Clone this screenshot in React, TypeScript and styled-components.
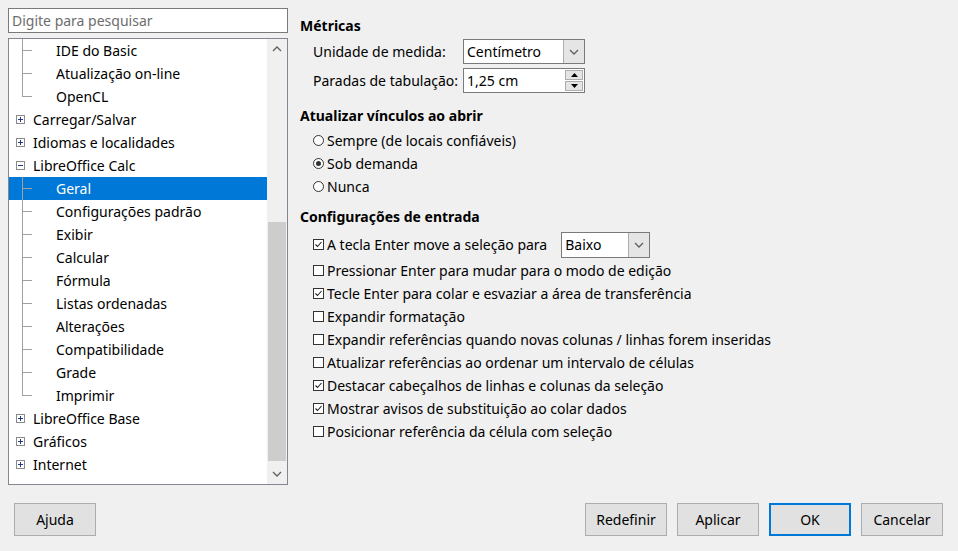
import React from "react";
import styled, { createGlobalStyle } from "styled-components";

const G = createGlobalStyle`
  html,body{margin:0;padding:0;background:#f0f0f0;}
  body{font-family:"Noto Sans","Open Sans",sans-serif;font-size:14px;color:#000;}
`;
const Page = styled.div`width:958px;height:551px;display:flex;flex-direction:column;box-sizing:border-box;padding:8px 8px 0 8px;`;
const Main = styled.div`display:flex;gap:12px;height:477px;`;
const Left = styled.div`width:280px;display:flex;flex-direction:column;gap:5px;`;
const Search = styled.div`height:25px;box-sizing:border-box;border:1px solid #7a7a7a;background:#fff;color:#6d6d6d;padding:1px 3px;line-height:21px;`;
const Tree = styled.div`flex:1;border:1px solid #828790;background:#fff;display:flex;overflow:hidden;`;
const Rows = styled.div`flex:1;padding-top:0px;`;
const Row = styled.div<{sel?:boolean}>`height:23px;display:flex;align-items:center;position:relative;background:${p=>p.sel?"#0078d7":"transparent"};color:${p=>p.sel?"#fff":"#000"};`;
const Child = styled.span`padding-left:47px;`;
const Top = styled.span`padding-left:8px;`;
const VLine = styled.span<{end?:boolean}>`position:absolute;left:13px;top:0;width:1px;height:${p=>p.end?"12px":"23px"};background:#a0a0a0;`;
const HLine = styled.span`position:absolute;left:13px;top:11px;width:10px;height:1px;background:#a0a0a0;`;
const Exp = styled.span`margin-left:7px;width:9px;height:9px;border:1px solid #8a8a8a;box-sizing:border-box;position:relative;flex:none;
 &::before{content:"";position:absolute;left:1px;right:1px;top:3px;height:1px;background:#1e3a8a;}
`;
const ExpPlus = styled(Exp)`&::after{content:"";position:absolute;top:1px;bottom:1px;left:3px;width:1px;background:#1e3a8a;}`;
const Scroll = styled.div`width:20px;background:#f0f0f0;display:flex;flex-direction:column;align-items:center;`;
const Arrow = styled.div`height:20px;display:flex;align-items:center;justify-content:center;color:#606060;`;
const Track = styled.div`flex:1;width:100%;display:flex;flex-direction:column;padding-top:163px;padding-bottom:3px;box-sizing:border-box;`;
const Thumb = styled.div`flex:1;background:#cdcdcd;margin:0 1px;`;
const Right = styled.div`flex:1;padding-top:7px;display:flex;flex-direction:column;`;
const H = styled.div`font-weight:bold;height:22px;line-height:22px;margin-bottom:2px;`;
const FormRow = styled.div`display:flex;align-items:center;height:25px;margin-bottom:4px;padding-left:13px;`;
const Label = styled.div`width:150px;`;
const Combo = styled.div<{w:number}>`width:${p=>p.w}px;height:25px;box-sizing:border-box;border:1px solid #7a7a7a;background:#fff;display:flex;`;
const ComboText = styled.div`flex:1;padding-left:3px;line-height:23px;`;
const ComboBtn = styled.div`width:20px;border-left:1px solid #adadad;background:#e5e5e5;display:flex;align-items:center;justify-content:center;`;
const Spin = styled.div`width:18px;display:flex;flex-direction:column;margin:1px;gap:1px;`;
const SpinB = styled.div`flex:1;border:1px solid #adadad;background:#e5e5e5;display:flex;align-items:center;justify-content:center;`;
const Opt = styled.div`display:flex;align-items:center;height:23px;padding-left:13px;gap:3px;`;
const Radio = styled.span<{on?:boolean}>`width:11px;height:11px;border-radius:50%;border:1px solid #333;background:#fff;box-sizing:border-box;display:flex;align-items:center;justify-content:center;
 &::after{content:"";width:5px;height:5px;border-radius:50%;background:${p=>p.on?"#333":"transparent"};}`;
const Box = styled.span`width:11px;height:11px;border:1px solid #333;background:#fff;box-sizing:border-box;display:flex;align-items:center;justify-content:center;flex:none;`;
const Gap = styled.div<{h:number}>`height:${p=>p.h}px;`;
const Foot = styled.div`display:flex;align-items:center;padding:18px 7px 0 6px;gap:10px;`;
const Btn = styled.div<{def?:boolean}>`width:82px;height:33px;box-sizing:border-box;border:${p=>p.def?"2px solid #0078d7":"1px solid #adadad"};background:#e1e1e1;display:flex;align-items:center;justify-content:center;`;
const Spacer = styled.div`flex:1;`;

const Chev = ({up}:{up?:boolean}) => <svg width="10" height="6" viewBox="0 0 10 6"><path d={up?"M1 5L5 1L9 5":"M1 1L5 5L9 1"} fill="none" stroke="#606060" strokeWidth="1.3"/></svg>;
const Tri = ({up}:{up?:boolean}) => <svg width="7" height="4" viewBox="0 0 7 4"><path d={up?"M0 4L3.5 0L7 4Z":"M0 0L3.5 4L7 0Z"} fill="#000"/></svg>;
const Check = () => <svg width="9" height="9" viewBox="0 0 9 9"><path d="M1.5 4.5L3.5 6.5L7.5 2" fill="none" stroke="#222" strokeWidth="1.1"/></svg>;

type T = {t:string; k:"c"|"p"|"m"; sel?:boolean; end?:boolean};
const tree:T[] = [
 {t:"IDE do Basic",k:"c"},{t:"Atualização on-line",k:"c"},{t:"OpenCL",k:"c",end:true},
 {t:"Carregar/Salvar",k:"p"},{t:"Idiomas e localidades",k:"p"},{t:"LibreOffice Calc",k:"m"},
 {t:"Geral",k:"c",sel:true},{t:"Configurações padrão",k:"c"},{t:"Exibir",k:"c"},{t:"Calcular",k:"c"},
 {t:"Fórmula",k:"c"},{t:"Listas ordenadas",k:"c"},{t:"Alterações",k:"c"},{t:"Compatibilidade",k:"c"},
 {t:"Grade",k:"c"},{t:"Imprimir",k:"c",end:true},{t:"LibreOffice Base",k:"p"},{t:"Gráficos",k:"p"},{t:"Internet",k:"p"},
];
const checks:[string,boolean][] = [
 ["Pressionar Enter para mudar para o modo de edição",false],
 ["Tecle Enter para colar e esvaziar a área de transferência",true],
 ["Expandir formatação",false],
 ["Expandir referências quando novas colunas / linhas forem inseridas",false],
 ["Atualizar referências ao ordenar um intervalo de células",false],
 ["Destacar cabeçalhos de linhas e colunas da seleção",true],
 ["Mostrar avisos de substituição ao colar dados",true],
 ["Posicionar referência da célula com seleção",false],
];

export default function App(){
 return <Page><G/>
  <Main>
   <Left>
    <Search>Digite para pesquisar</Search>
    <Tree>
     <Rows>
      {tree.map((r,i)=><Row key={i} sel={r.sel}>
       {r.k==="c"?<><VLine end={r.end}/><HLine/><Child>{r.t}</Child></>:
        <>{r.k==="p"?<ExpPlus/>:<Exp/>}<Top>{r.t}</Top></>}
      </Row>)}
     </Rows>
     <Scroll>
      <Arrow><Chev up/></Arrow>
      <Track><Thumb/></Track>
      <Arrow><Chev/></Arrow>
     </Scroll>
    </Tree>
   </Left>
   <Right>
    <H>Métricas</H>
    <FormRow><Label>Unidade de medida:</Label><Combo w={122}><ComboText>Centímetro</ComboText><ComboBtn><Chev/></ComboBtn></Combo></FormRow>
    <FormRow><Label>Paradas de tabulação:</Label><Combo w={122}><ComboText>1,25 cm</ComboText><Spin><SpinB><Tri up/></SpinB><SpinB><Tri/></SpinB></Spin></Combo></FormRow>
    <Gap h={8}/>
    <H>Atualizar vínculos ao abrir</H>
    <Opt><Radio/>Sempre (de locais confiáveis)</Opt>
    <Opt><Radio on/>Sob demanda</Opt>
    <Opt><Radio/>Nunca</Opt>
    <Gap h={8}/>
    <H>Configurações de entrada</H>
    <Opt style={{height:29}}><Box><Check/></Box>A tecla Enter move a seleção para<span style={{width:8}}/><Combo w={89} style={{height:26}}><ComboText>Baixo</ComboText><ComboBtn><Chev/></ComboBtn></Combo></Opt>
    {checks.map(([t,c],i)=><Opt key={i}><Box>{c&&<Check/>}</Box>{t}</Opt>)}
   </Right>
  </Main>
  <Foot>
   <Btn>Ajuda</Btn><Spacer/>
   <Btn>Redefinir</Btn><Btn>Aplicar</Btn><Btn def>OK</Btn><Btn>Cancelar</Btn>
  </Foot>
 </Page>;
}
